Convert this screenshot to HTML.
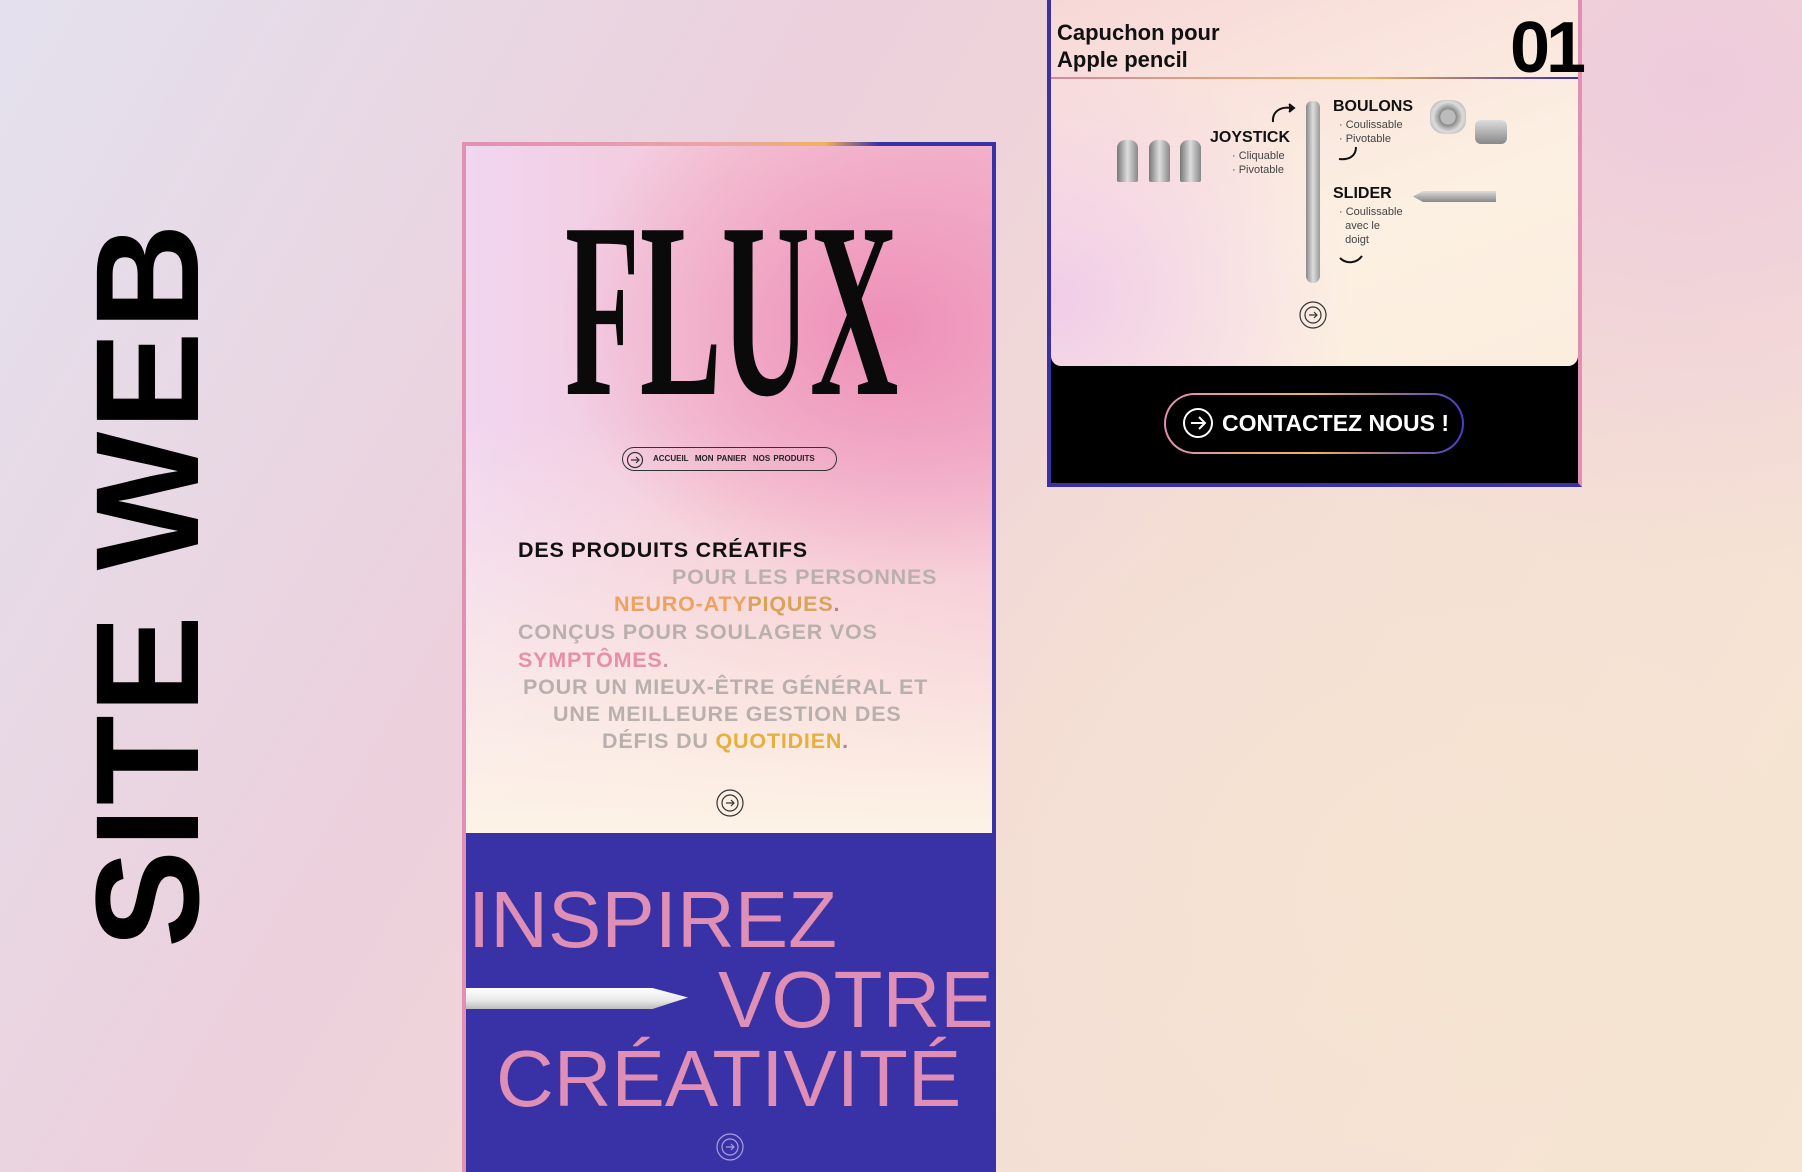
<!DOCTYPE html>
<html><head><meta charset="utf-8"><style>
*{margin:0;padding:0;box-sizing:border-box}
body{width:1802px;height:1172px;overflow:hidden;position:relative;font-family:"Liberation Sans",sans-serif;
background:radial-gradient(ellipse 900px 700px at 1700px 80px,#eecbdc 0%,rgba(238,203,220,0) 70%),
radial-gradient(ellipse 900px 700px at 1500px 900px,#f6e4d2 0%,rgba(246,228,210,0) 80%),
linear-gradient(120deg,#e4e1ee 0%,#ecd0dc 35%,#f3dcd5 60%,#f6e5d4 100%);}
.abs{position:absolute}
.sw{position:absolute;left:92px;top:230px;transform-origin:0 0;transform:rotate(-90deg) translateX(-718px);font-weight:bold;font-size:147px;line-height:113px;color:#000;white-space:nowrap;width:718px;letter-spacing:2px}
.top{position:absolute;left:466px;top:146px;width:526px;height:687px;background:
radial-gradient(ellipse 330px 260px at 420px 180px,#ee90b8 0%,rgba(238,144,184,0) 100%),
linear-gradient(180deg,rgba(0,0,0,0) 40%,#fdf3e6 100%),
linear-gradient(90deg,#f1d6f0,#f4c7d6 50%,#f3bad0)}
.blue{position:absolute;left:466px;top:833px;width:526px;height:339px;background:#3931a6;overflow:hidden}
.rb{position:absolute;left:992px;top:142px;width:4px;height:1030px;background:#3931a6}
.lb{position:absolute;left:462px;top:142px;width:4px;height:1030px;background:#e28fb4}
.tb{position:absolute;left:462px;top:142px;width:534px;height:4px;background:linear-gradient(90deg,#e28fb4,#e9a6a8 50%,#f0b25a 68%,#3931a6 78%)}
.flux{position:absolute;left:565px;top:186px;font-family:"Liberation Serif",serif;font-weight:bold;font-size:250px;line-height:250px;color:#0a0a0a;transform:scaleX(0.49);transform-origin:0 0;white-space:nowrap}
.nav{position:absolute;left:622px;top:447px;width:215px;height:24px;border:1.3px solid #333;border-radius:12px;font-size:8px;font-weight:bold;color:#222;line-height:22px;padding-left:30px;word-spacing:1px}
.t{position:absolute;font-size:21.5px;font-weight:bold;white-space:nowrap;letter-spacing:0.8px;color:#b9b0ae}
.pk{font-size:80px;color:#df8fb6;position:absolute;white-space:nowrap;line-height:1}
.cin{position:absolute;left:1051px;top:0;width:527px;height:366px;border-radius:0 0 10px 10px;background:radial-gradient(ellipse 300px 250px at 0px 300px,#f1cce8,rgba(241,204,232,0)),linear-gradient(160deg,#f7d8d8,#fcf0e2 60%,#fbeedf)}
.card2{position:absolute;left:1047px;top:0;width:535px;height:487px;background:#000;border:4px solid #3931a6;border-top:none;border-right-color:#e28fb4}
.b{font-weight:bold;color:#111;position:absolute;white-space:nowrap}
.s{position:absolute;font-size:11px;color:#444;white-space:nowrap;line-height:14px}
svg{position:absolute;overflow:visible}
</style></head><body>
<div class="sw">SITE WEB</div>

<div class="top"></div>
<div class="blue"></div>
<div class="lb"></div><div class="rb"></div><div class="tb"></div>

<div class="flux">FLUX</div>
<div class="nav">ACCUEIL &nbsp;MON PANIER &nbsp;NOS PRODUITS</div>
<svg style="left:626px;top:451px" width="18" height="18" viewBox="0 0 18 18" fill="none" stroke="#333" stroke-width="1.2"><circle cx="9" cy="9" r="7.5"/><path d="M5 9h8M10 6l3 3-3 3"/></svg>

<div class="t" style="left:518px;top:538px;color:#111">DES PRODUITS CRÉATIFS</div>
<div class="t" style="left:672px;top:565px">POUR LES PERSONNES</div>
<div class="t" style="left:614px;top:592px"><span style="color:#eda35f">NEURO-ATY</span><span style="color:#d9a35c">PIQUES</span><span style="color:#a88">.</span></div>
<div class="t" style="left:518px;top:620px">CONÇUS POUR SOULAGER VOS</div>
<div class="t" style="left:518px;top:648px"><span style="color:#e88fa6">SYMPTÔMES</span><span style="color:#c99">.</span></div>
<div class="t" style="left:523px;top:675px">POUR UN MIEUX-ÊTRE GÉNÉRAL ET</div>
<div class="t" style="left:553px;top:702px">UNE MEILLEURE GESTION DES</div>
<div class="t" style="left:602px;top:729px">DÉFIS DU <span style="color:#e6b03c">QUOTIDIEN</span><span style="color:#a88">.</span></div>
<svg style="left:716px;top:789px" width="28" height="28" viewBox="0 0 28 28" fill="none" stroke="#333" stroke-width="1.2"><circle cx="14" cy="14" r="13"/><circle cx="14" cy="14" r="8"/><path d="M10 14h8M15 11l3 3-3 3"/></svg>

<div class="pk" style="left:468px;top:880px">INSPIREZ</div>
<div class="abs" style="left:466px;top:988px;width:222px;height:21px;background:linear-gradient(180deg,#fff,#e8e8e8 60%,#bbb);clip-path:polygon(0 0,84% 0,100% 45%,84% 100%,0 100%)"></div>
<div class="pk" style="left:718px;top:960px">VOTRE</div>
<div class="pk" style="left:496px;top:1039px">CRÉATIVITÉ</div>
<svg style="left:716px;top:1133px" width="28" height="28" viewBox="0 0 28 28" fill="none" stroke="#a9a0e0" stroke-width="1.2"><circle cx="14" cy="14" r="13"/><circle cx="14" cy="14" r="8"/><path d="M10 14h8M15 11l3 3-3 3"/></svg>

<div class="card2"></div>
<div class="cin"></div>
<div class="abs" style="left:1051px;top:77px;width:527px;height:2px;background:linear-gradient(90deg,#d08aa4,#f0b25a 60%,#3931a6)"></div>
<div class="b" style="left:1057px;top:19px;font-size:22px;line-height:27px">Capuchon pour<br>Apple pencil</div>
<div class="b" style="left:1510px;top:12px;font-size:72px;line-height:72px;letter-spacing:-4px;color:#000">01</div>

<div class="abs" style="left:1117px;top:140px;width:21px;height:42px;border-radius:8px 8px 2px 2px;background:linear-gradient(90deg,#777,#ddd,#888)"></div>
<div class="abs" style="left:1149px;top:140px;width:21px;height:42px;border-radius:8px 8px 2px 2px;background:linear-gradient(90deg,#777,#ddd,#888)"></div>
<div class="abs" style="left:1180px;top:140px;width:21px;height:42px;border-radius:8px 8px 2px 2px;background:linear-gradient(90deg,#777,#ddd,#888)"></div>
<div class="b" style="left:1210px;top:129px;font-size:16px">JOYSTICK</div>
<div class="s" style="left:1232px;top:149px">· Cliquable<br>· Pivotable</div>
<svg style="left:1270px;top:100px" width="30" height="24" viewBox="0 0 30 24" fill="none" stroke="#111" stroke-width="2"><path d="M3 22C2 12 10 6 22 8"/><path d="M19 4l5 4-5 4" fill="#111"/></svg>
<div class="abs" style="left:1306px;top:101px;width:14px;height:182px;border-radius:6px 6px 7px 7px;background:linear-gradient(90deg,#888,#ddd,#999)"></div>
<div class="b" style="left:1333px;top:98px;font-size:16px">BOULONS</div>
<div class="s" style="left:1339px;top:118px">· Coulissable<br>· Pivotable</div>
<svg style="left:1334px;top:145px" width="26" height="20" viewBox="0 0 26 20" fill="none" stroke="#111" stroke-width="2"><path d="M22 2C22 12 14 15 5 14"/></svg>
<svg style="left:1334px;top:252px" width="30" height="16" viewBox="0 0 30 16" fill="none" stroke="#111" stroke-width="2"><path d="M28 4C22 12 12 12 6 6"/></svg>
<div class="abs" style="left:1430px;top:100px;width:36px;height:34px;border-radius:40%;background:radial-gradient(circle,#bbb 30%,#888 32%,#ddd 60%,#999)"></div>
<div class="abs" style="left:1475px;top:120px;width:32px;height:24px;border-radius:6px;background:linear-gradient(#ddd,#888)"></div>
<div class="b" style="left:1333px;top:185px;font-size:16px">SLIDER</div>
<div class="s" style="left:1339px;top:205px">· Coulissable<br>&nbsp;&nbsp;avec le<br>&nbsp;&nbsp;doigt</div>
<div class="abs" style="left:1413px;top:191px;width:83px;height:11px;background:linear-gradient(#ddd,#888);clip-path:polygon(0 50%,12% 0,100% 0,100% 100%,12% 100%)"></div>
<svg style="left:1299px;top:301px" width="28" height="28" viewBox="0 0 28 28" fill="none" stroke="#333" stroke-width="1.2"><circle cx="14" cy="14" r="13"/><circle cx="14" cy="14" r="8"/><path d="M10 14h8M15 11l3 3-3 3"/></svg>

<div class="abs" style="left:1164px;top:393px;width:300px;height:61px;border-radius:31px;padding:2px;background:linear-gradient(90deg,#e28fb4,#f0b25a 50%,#4a3bd0)">
<div style="width:100%;height:100%;border-radius:29px;background:#000;color:#fff;font-size:23px;font-weight:bold;line-height:57px;padding-left:56px;white-space:nowrap">CONTACTEZ NOUS !</div></div>
<svg style="left:1182px;top:407px" width="32" height="32" viewBox="0 0 32 32" fill="none" stroke="#fff" stroke-width="2"><circle cx="16" cy="16" r="14"/><path d="M9 16h14M17 10l6 6-6 6"/></svg>
</body></html>
